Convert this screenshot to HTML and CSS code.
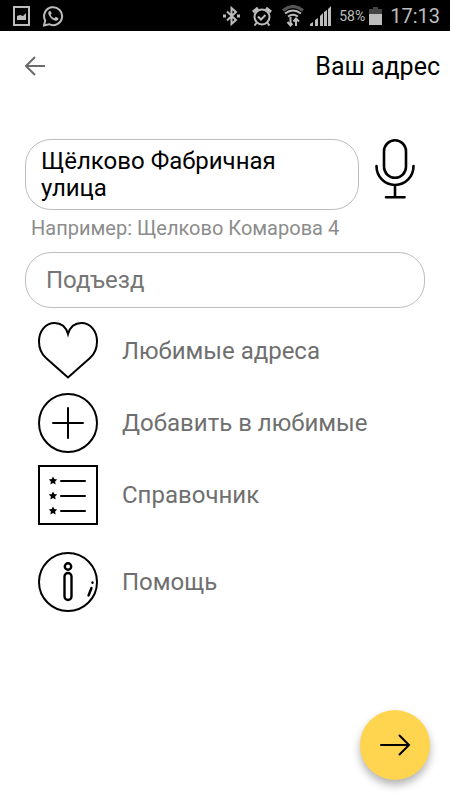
FILE: index.html
```html
<!DOCTYPE html>
<html lang="ru">
<head>
<meta charset="utf-8">
<meta name="viewport" content="width=device-width, initial-scale=1">
<title>Ваш адрес</title>
<link rel="stylesheet" href="styles.css">
</head>
<body>
<div class="status">
  <svg width="18" height="20" viewBox="0 0 18 20" aria-hidden="true"><rect x="1" y="1" width="15" height="18" fill="none" stroke="currentColor" stroke-width="2"/><path d="M4 14v-4l3-1 3 1 3-3v7z" fill="currentColor"/></svg>
  <svg width="22" height="22" viewBox="0 0 22 22" aria-hidden="true"><path d="M1 20.500l1.200-5A9 9 0 1 1 6 19.200z" fill="none" stroke="currentColor" stroke-width="2"/><path d="M6.500 6c-1.300.7-1.600 2.300-.7 4.100 1.400 2.900 3.900 5 6.700 5.600 1.800.3 3-.9 3-2.500l-2.700-1.400-1.400 1.500c-1.800-.7-3-1.900-3.800-3.600l1.100-1.300L7.500 6z" fill="currentColor"/></svg>
  <div class="status-right">
    <svg width="20" height="20" viewBox="0 0 20 20" aria-hidden="true"><path d="M5 5.500l9 8.500-4.500 4V2L14 6l-9 8.500" fill="none" stroke="currentColor" stroke-width="2"/><path d="M1 8.500h3v3H1zM15 8.500h3v3h-3z" fill="currentColor"/></svg>
    <svg width="20" height="20" viewBox="0 0 20 20" aria-hidden="true"><g fill="none" stroke="currentColor" stroke-width="2"><circle cx="10" cy="11" r="7.500"/><path d="M6 10.500l3 3 4.500-4.500M4.500 17l-2 2.500M15.500 17l2 2.500"/><path d="M1 6l5-4M19 6l-5-4" stroke-width="3"/></g></svg>
    <svg width="22" height="22" viewBox="0 0 22 22" aria-hidden="true"><g fill="none" stroke="currentColor" stroke-width="2"><path d="M1 5.500Q11-2.500 21 5.500" stroke="#555" stroke-width="3"/><path d="M3 8.500Q11 2.500 19 8.500M6 11.500Q11 8 16 11.500"/><path d="M8.500 12v8M5.500 17l3 3.500 2-2M14 21v-7M11.500 16.500l2.500-3 3 3"/></g></svg>
    <svg class="signal" width="22" height="20" viewBox="0 0 22 20" fill="currentColor" aria-hidden="true"><path d="M0 20v-2l3-2v4zM5 14l3-2v8H5zM10 10l3-3v13h-3zM14 6l3-2v16h-3zM18 3l3-3v20h-3z"/></svg>
    <span class="percent">58%</span>
    <svg width="13" height="20" viewBox="0 0 13 20" aria-hidden="true"><path d="M4 1h5v2h4v6H0V3h4z" fill="#444"/><path d="M0 8h13v11H0z" fill="currentColor"/></svg>
    <time class="clock">17:13</time>
  </div>
</div>
<header class="header">
  <button class="icon-button" type="button" aria-label="Назад"><svg width="20" height="20" viewBox="0 0 20 20"><path d="M20 10H2M10 1l-9 9 9 9" fill="none" stroke="#6b6b6b" stroke-width="2"/></svg></button>
  <h1 class="title">Ваш адрес</h1>
</header>
<main class="content">
  <div class="address-row">
    <textarea class="field address" rows="2" aria-label="Адрес" aria-describedby="hint">Щёлково Фабричная улица</textarea>
    <button class="icon-button" type="button" aria-label="Голосовой ввод"><svg width="40" height="60" viewBox="0 0 40 60"><g fill="none" stroke="#000" stroke-width="2.600" stroke-linecap="round"><rect x="9" y="1.300" width="22" height="37.500" rx="11"/><path d="M1.500 27C1.500 37.500 9.500 46 20 46s18.500-8.500 18.500-19M20 46v12M11 58.300h18.500"/></g></svg></button>
  </div>
  <p class="hint" id="hint">Например: Щелково Комарова 4</p>
  <input class="field entrance" type="text" placeholder="Подъезд" aria-label="Подъезд">
  <nav class="menu">
    <a class="item" href="#favorites"><svg width="60" height="60" viewBox="0 0 60 60"><path d="M30 56.500L8 37C3.500 33 1 27.500 1 20.500 1 10 7.500 2 16.500 2 23 2 28 6 30 13c2-7 7-11 13.500-11C52.500 2 59 10 59 20.500c0 7-2.500 12.500-7 16.500z" fill="none" stroke="#000" stroke-width="2"/></svg><span>Любимые адреса</span></a>
    <a class="item" href="#add"><svg width="60" height="60" viewBox="0 0 60 60"><g fill="none" stroke="#000" stroke-width="2" stroke-linecap="round"><circle cx="30" cy="30" r="29"/><path d="M30 15v30M15 30h30"/></g></svg><span>Добавить в любимые</span></a>
    <a class="item" href="#directory"><svg width="60" height="60" viewBox="0 0 60 60"><rect x="1" y="1" width="58" height="58" fill="none" stroke="#000" stroke-width="2"/><defs><path id="star" d="M0-4l1.300 2.600 2.900.4-2.100 2 .5 2.900L0 2.600l-2.600 1.300.5-2.900-2.100-2 2.900-.4z"/></defs><use href="#star" x="15" y="15.500"/><use href="#star" x="15" y="30.500"/><use href="#star" x="15" y="45.500"/><path d="M23 16h24M23 31h24M23 46h24" stroke="#000" stroke-width="2" stroke-linecap="round"/></svg><span>Справочник</span></a>
    <a class="item help" href="#help"><svg width="60" height="60" viewBox="0 0 60 60"><g fill="none" stroke="#000" stroke-width="2" stroke-linecap="round"><circle cx="30" cy="30" r="29"/><g stroke-width="2.400"><circle cx="30" cy="14.500" r="3.200"/><rect x="26.500" y="21" width="7" height="27" rx="3.500"/><path d="M53.500 36l-3 7.500M54.500 30.500v.3"/></g></g></svg><span>Помощь</span></a>
  </nav>
</main>
<button class="next" type="button" aria-label="Далее"><svg width="32" height="22" viewBox="0 0 32 22"><path d="M2 11h28M20.500 1.500L30 11l-9.500 9.500" fill="none" stroke="#000" stroke-width="2" stroke-linecap="round"/></svg></button>
</body>
</html>
```

FILE: styles.css
```css
* {
  box-sizing: border-box;
}

body {
  margin: 0;
  min-height: 100vh;
  display: flex;
  flex-direction: column;
  background: #fff;
  color: #000;
  font-family: Roboto, "Noto Sans", sans-serif;
  font-size: 24px;
}

svg {
  display: block;
  flex: none;
}

button {
  font: inherit;
  cursor: pointer;
}

.status {
  display: flex;
  align-items: center;
  gap: 12px;
  height: 31px;
  padding: 0 10px 0 13px;
  background: #000;
  color: #bdbdbd;
}

.status-right {
  display: flex;
  align-items: center;
  gap: 10px;
  margin-left: auto;
}

.signal {
  margin-left: -4px;
}

.percent {
  margin: 0 -6px 0 -3px;
  font-size: 14px;
}

.clock {
  margin-left: -2px;
  font-size: 20px;
}

.header {
  display: flex;
  align-items: center;
  justify-content: space-between;
  height: 70px;
  padding: 0 10px 0 25px;
}

.icon-button {
  flex: none;
  padding: 0;
  border: 0;
  background: none;
}

.title {
  margin: 0;
  font-size: 25px;
  font-weight: 400;
}

.content {
  display: flex;
  flex-direction: column;
  padding: 38px 25px 0;
}

.address-row {
  display: flex;
  align-items: flex-start;
  gap: 16px;
  padding-right: 10px;
}

.field {
  display: block;
  border: 1px solid #bdbdbd;
  border-radius: 26px;
  background: #fff;
  color: #000;
  font: inherit;
}

.address {
  flex: 1;
  min-width: 0;
  padding: 8px 15px 7px;
  line-height: 27px;
  resize: none;
  overflow: hidden;
}

.hint {
  margin: 0;
  padding: 6px 6px 12px;
  color: #8c8c8c;
  font-size: 20px;
  line-height: 24px;
}

.entrance {
  width: 100%;
  height: 56px;
  padding: 0 20px;
}

.entrance::placeholder {
  color: #757575;
  opacity: 1;
}

.menu {
  display: flex;
  flex-direction: column;
  padding: 7px 13px;
}

.item {
  display: flex;
  align-items: center;
  gap: 24px;
  height: 72px;
  color: #6f6f6f;
  text-decoration: none;
}

.help {
  margin-top: 15px;
}

.next {
  display: grid;
  place-items: center;
  width: 70px;
  height: 70px;
  margin: auto 20px 20px auto;
  padding: 0;
  border: 0;
  border-radius: 50%;
  background: #ffd54f;
  box-shadow: 0 5px 8px rgba(0, 0, 0, 0.3);
}
```
